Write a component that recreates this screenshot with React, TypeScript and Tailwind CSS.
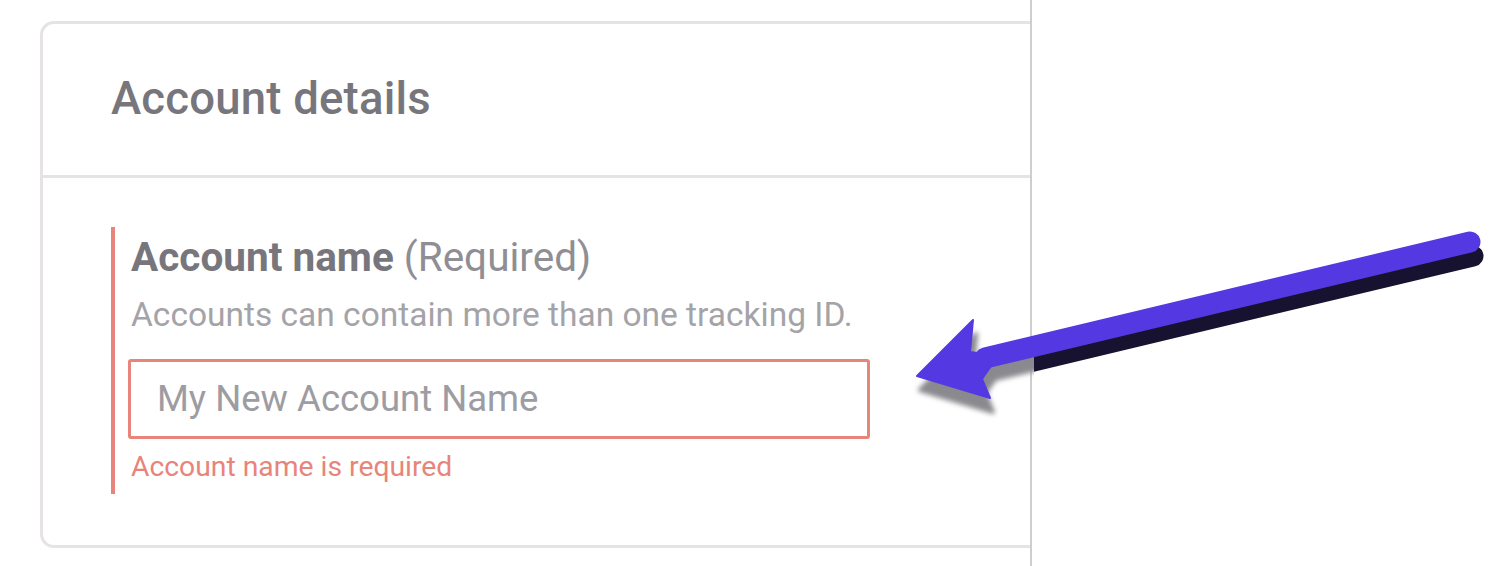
import React from 'react';

function Arrow() {
  const shaft = 'M1470 242 L985 358';
  const head = '917,376 973,320 970,352 998,356 982,379 990,398';
  return (
    <svg className="absolute inset-0 pointer-events-none" width="1500" height="566" viewBox="0 0 1500 566">
      <defs>
        <clipPath id="rightSide">
          <rect x="1031" y="0" width="500" height="566" />
        </clipPath>
        <clipPath id="leftSide">
          <rect x="0" y="0" width="1031" height="566" />
        </clipPath>
        <filter id="soft" x="-20%" y="-20%" width="140%" height="140%">
          <feGaussianBlur stdDeviation="2.5" />
        </filter>
      </defs>
      {/* shadow */}
      <g transform="translate(3 14)">
        <g clipPath="url(#rightSide)">
          <path d={shaft} stroke="#16122f" strokeWidth="21" strokeLinecap="round" fill="none" />
        </g>
        <g clipPath="url(#leftSide)" filter="url(#soft)">
          <path d={shaft} stroke="#8a898f" strokeWidth="21" strokeLinecap="round" fill="none" />
          <polygon points={head} fill="#8a898f" stroke="#8a898f" strokeWidth="4" strokeLinejoin="round" />
        </g>
      </g>
      {/* arrow */}
      <path d={shaft} stroke="#5439e2" strokeWidth="21" strokeLinecap="round" fill="none" />
      <polygon points={head} fill="#5439e2" stroke="#5439e2" strokeWidth="2" strokeLinejoin="round" />
    </svg>
  );
}

export default function App() {
  return (
    <div className="relative w-[1500px] h-[566px] bg-white overflow-hidden" style={{ fontFamily: 'Roboto, "Noto Sans", sans-serif' }}>
      <div className="flex h-full">
        {/* Left panel with the cut-off card */}
        <div className="w-[1032px] h-full shrink-0 overflow-hidden border-r-2 border-[#cfcdcd] pl-[40px] pt-[21px]">
          <div className="w-[1120px] h-[527px] rounded-[14px] border-[3px] border-[#e8e3e3] bg-white">
            {/* Header */}
            <div className="h-[154px] flex items-center pl-[68px] border-b-[3px] border-[#e8e3e3]">
              <h2 className="text-[45.5px] font-medium text-[#77767c] tracking-[0.2px]">Account details</h2>
            </div>
            {/* Body */}
            <div className="pt-[49px] pl-[68px]">
              <div className="border-l-4 border-[#e8857b] pl-[16px] pb-[9px]">
                <div className="leading-[60px] text-[40.5px]">
                  <span className="font-bold text-[#77767c]">Account name</span>{' '}
                  <span className="text-[#8f8e94]">(Required)</span>
                </div>
                <p className="mt-[8px] leading-[40px] text-[33.5px] text-[#a4a3a8]">
                  Accounts can contain more than one tracking ID.
                </p>
                <div className="mt-[24px] -ml-[3px] w-[742px] h-[80px] rounded-[3px] border-[3px] border-[#e8857b] flex items-center pl-[26px]">
                  <span className="text-[36.5px] text-[#9d9ca2]">My New Account Name</span>
                </div>
                <p className="mt-[10px] leading-[36px] text-[28.3px] text-[#e8847a]">Account name is required</p>
              </div>
            </div>
          </div>
        </div>
        <div className="flex-1 bg-white" />
      </div>
      <Arrow />
    </div>
  );
}
